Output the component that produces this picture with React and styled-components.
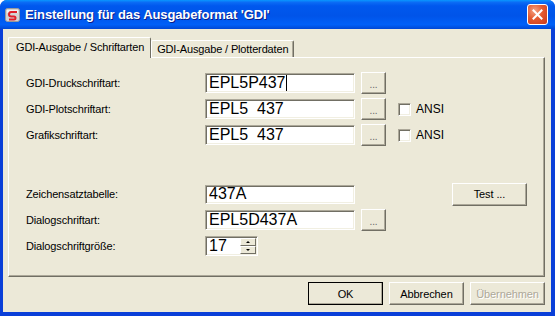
import React from "react";
import styled, { createGlobalStyle } from "styled-components";

const GlobalStyle = createGlobalStyle`
  html, body {
    margin: 0;
    padding: 0;
    background: #ffffff;
  }
  body {
    font-family: "Liberation Sans", Arial, sans-serif;
    font-size: 11px;
    color: #000;
  }
`;

const Window = styled.div`
  width: 555px;
  height: 316px;
  box-sizing: border-box;
  display: flex;
  flex-direction: column;
  background: #0a3fd8;
  border-radius: 7px 7px 0 0;
  overflow: hidden;
`;

const TitleBar = styled.div`
  height: 29px;
  flex-shrink: 0;
  display: flex;
  align-items: center;
  padding: 0 7px 0 5px;
  background: linear-gradient(
    to bottom,
    #0997ff 0%,
    #0b6cf5 8%,
    #0058ee 20%,
    #0054e9 55%,
    #0060f8 85%,
    #0047d4 100%
  );
`;

const TitleText = styled.div`
  flex: 1;
  margin-left: 4px;
  color: #ffffff;
  font-family: "Liberation Sans", Arial, sans-serif;
  font-weight: bold;
  font-size: 13px;
  letter-spacing: -0.1px;
  text-shadow: 1px 1px 0 #0a1e8a;
  white-space: pre;
`;

const CloseButton = styled.div`
  width: 21px;
  height: 21px;
  box-sizing: border-box;
  border: 1px solid #ffffff;
  border-radius: 3px;
  background: radial-gradient(circle at 35% 30%, #f4a283 0%, #e45a30 45%, #c8391c 100%);
  display: flex;
  align-items: center;
  justify-content: center;
`;

const Frame = styled.div`
  flex: 1;
  display: flex;
  flex-direction: column;
  margin: 0 4px 4px 3px;
  background: #ece9d8;
  padding: 8px 6px 0 5px;
`;

const TabRow = styled.div`
  display: flex;
  align-items: flex-end;
  height: 20px;
  position: relative;
  z-index: 1;
`;

const Tab = styled.div`
  box-sizing: border-box;
  height: ${(p) => (p.$active ? "21px" : "17px")};
  margin-bottom: ${(p) => (p.$active ? "-1px" : "0")};
  padding: ${(p) => (p.$active ? "3px 6px 0 7px" : "2px 5px 0 5px")};
  background: #ece9d8;
  border-top: 1px solid #ffffff;
  border-left: 1px solid #ffffff;
  border-right: 1px solid #716f64;
  border-radius: 2px 2px 0 0;
  white-space: nowrap;
  letter-spacing: -0.15px;
  box-shadow: ${(p) => (p.$active ? "none" : "inset -1px 0 0 #aca899")};
`;

const Panel = styled.div`
  box-sizing: border-box;
  width: 537px;
  height: 220px;
  border-top: 1px solid #ffffff;
  border-left: 1px solid #ffffff;
  border-right: 1px solid #716f64;
  border-bottom: 1px solid #716f64;
  box-shadow: inset -1px -1px 0 #aca899;
  padding: 15px 0 0 17px;
  display: flex;
  flex-direction: column;
`;

const Row = styled.div`
  display: flex;
  align-items: center;
  height: 20px;
  margin-bottom: ${(p) => p.$after || 6}px;
`;

const Label = styled.div`
  width: 179px;
  letter-spacing: -0.15px;
  white-space: nowrap;
`;

const Field = styled.div`
  box-sizing: border-box;
  width: ${(p) => p.$w || 150}px;
  height: ${(p) => p.$h || 20}px;
  background: #ffffff;
  border-top: 1px solid #aca899;
  border-left: 1px solid #aca899;
  border-right: 1px solid #ffffff;
  border-bottom: 1px solid #ffffff;
  box-shadow: inset 1px 1px 0 #716f64, inset -1px -1px 0 #f1efe2;
  padding: 0 0 0 3px;
  font-size: 16px;
  line-height: 18px;
  white-space: pre;
  display: flex;
  align-items: center;
  overflow: hidden;
`;

const Caret = styled.span`
  display: inline-block;
  width: 1px;
  height: 16px;
  background: #000;
`;

const RaisedButton = styled.div`
  box-sizing: border-box;
  width: ${(p) => p.$w}px;
  height: ${(p) => p.$h}px;
  margin-left: ${(p) => p.$ml || 0}px;
  background: #ece9d8;
  border-top: 1px solid #ffffff;
  border-left: 1px solid #ffffff;
  border-right: 1px solid #716f64;
  border-bottom: 1px solid #716f64;
  box-shadow: inset -1px -1px 0 #aca899;
  display: flex;
  align-items: center;
  justify-content: center;
  font-size: 11px;
  color: ${(p) => (p.$disabled ? "#aca899" : "#000")};
  text-shadow: ${(p) => (p.$disabled ? "1px 1px 0 #ffffff" : "none")};
  letter-spacing: -0.1px;
`;

const DefaultButton = styled(RaisedButton)`
  outline: 1px solid #000;
  outline-offset: -1px;
  border-top-color: #ffffff;
`;

const Dots = styled.span`
  color: #666;
  font-size: 10px;
  margin-top: 2px;
`;

const CheckLabel = styled.label`
  display: flex;
  align-items: center;
  margin-left: 12px;
  font-size: 12px;
`;

const CheckBox = styled.span`
  box-sizing: border-box;
  width: 13px;
  height: 13px;
  background: #ffffff;
  border-top: 1px solid #aca899;
  border-left: 1px solid #aca899;
  border-right: 1px solid #ffffff;
  border-bottom: 1px solid #ffffff;
  box-shadow: inset 1px 1px 0 #716f64, inset -1px -1px 0 #f1efe2;
  margin-right: 5px;
`;

const Spin = styled.div`
  display: flex;
  flex-direction: column;
  margin-left: auto;
  margin-right: 1px;
  width: 16px;
  height: 16px;
`;

const SpinHalf = styled.div`
  box-sizing: border-box;
  flex: 1;
  background: #ece9d8;
  border-top: 1px solid #ffffff;
  border-left: 1px solid #ffffff;
  border-right: 1px solid #716f64;
  border-bottom: 1px solid #716f64;
  display: flex;
  align-items: center;
  justify-content: center;
`;

const Arrow = styled.span`
  width: 0;
  height: 0;
  border-left: 2px solid transparent;
  border-right: 2px solid transparent;
  ${(p) => (p.$up ? "border-bottom: 2px solid #000;" : "border-top: 2px solid #000;")}
`;

const Footer = styled.div`
  display: flex;
  justify-content: flex-end;
  gap: 6px;
  padding: 5px 0 0 0;
`;

function AppIcon() {
  return (
    <svg width="16" height="16" viewBox="0 0 16 16">
      <rect x="0.5" y="1.5" width="14" height="13" rx="2" fill="#d4d4d4" stroke="#9a9a9a" />
      <rect x="2" y="3" width="11" height="3" fill="#f2f2f2" />
      <path d="M12 5 L6 5 Q4 5 4 7.5 Q4 9.5 6.5 9.5 L9 9.5 Q10.5 9.5 10.5 11 Q10.5 12.5 9 12.5 L4 12.5" fill="none" stroke="#e0202a" strokeWidth="2" />
    </svg>
  );
}

function CloseIcon() {
  return (
    <svg width="11" height="11" viewBox="0 0 11 11">
      <path d="M1.5 1.5 L9.5 9.5 M9.5 1.5 L1.5 9.5" stroke="#fff" strokeWidth="2" strokeLinecap="square" />
    </svg>
  );
}

function FontRow({ label, value, caret, ansi, after }) {
  return (
    <Row $after={after}>
      <Label>{label}</Label>
      <Field>
        {value}
        {caret ? <Caret /> : null}
      </Field>
      <RaisedButton $w={25} $h={22} $ml={6}>
        <Dots>...</Dots>
      </RaisedButton>
      {ansi ? (
        <CheckLabel>
          <CheckBox />
          ANSI
        </CheckLabel>
      ) : null}
    </Row>
  );
}

export default function App() {
  return (
    <>
      <GlobalStyle />
      <Window>
        <TitleBar>
          <AppIcon />
          <TitleText>Einstellung für das Ausgabeformat 'GDI'</TitleText>
          <CloseButton>
            <CloseIcon />
          </CloseButton>
        </TitleBar>
        <Frame>
          <TabRow>
            <Tab $active>GDI-Ausgabe / Schriftarten</Tab>
            <Tab>GDI-Ausgabe / Plotterdaten</Tab>
          </TabRow>
          <Panel>
            <FontRow label="GDI-Druckschriftart:" value="EPL5P437" caret />
            <FontRow label="GDI-Plotschriftart:" value="EPL5  437" ansi />
            <FontRow label="Grafikschriftart:" value="EPL5  437" ansi after={39} />

            <Row>
              <Label>Zeichensatztabelle:</Label>
              <Field $h={19}>437A</Field>
              <RaisedButton $w={75} $h={23} $ml={97}>
                Test ...
              </RaisedButton>
            </Row>
            <FontRow label="Dialogschriftart:" value="EPL5D437A" />
            <Row>
              <Label>Dialogschriftgröße:</Label>
              <Field $w={53}>
                17
                <Spin>
                  <SpinHalf>
                    <Arrow $up />
                  </SpinHalf>
                  <SpinHalf>
                    <Arrow />
                  </SpinHalf>
                </Spin>
              </Field>
            </Row>
          </Panel>
          <Footer>
            <DefaultButton $w={75} $h={23}>OK</DefaultButton>
            <RaisedButton $w={75} $h={23}>Abbrechen</RaisedButton>
            <RaisedButton $w={75} $h={23} $disabled>Übernehmen</RaisedButton>
          </Footer>
        </Frame>
      </Window>
    </>
  );
}
